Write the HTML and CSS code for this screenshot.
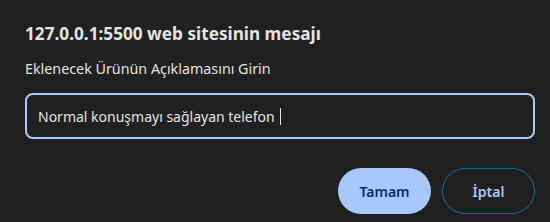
FILE: index.html
```html
<!DOCTYPE html>
<html lang="tr">
<head>
    <meta charset="UTF-8">
    <meta name="viewport" content="width=device-width, initial-scale=1.0">
    <title>Mesaj</title>
    <link rel="stylesheet" href="styles.css">
</head>
<body>

<div class="dialog">
    <h1 class="title">127.0.0.1:5500 web sitesinin mesajı</h1>
    <label class="message" for="answer">Eklenecek Ürünün Açıklamasını Girin</label>
    <div class="input-box">
        <span id="answer" class="input-text">Normal konuşmayı sağlayan telefon</span><span class="caret"></span>
    </div>
    <div class="buttons">
        <button class="btn btn-primary">Tamam</button>
        <button class="btn btn-outline">İptal</button>
    </div>
</div>

</body>
</html>
```

FILE: styles.css
```css
body {
    margin: 0;
    background-color: #202020;
    font-family: "Noto Sans", "Open Sans", sans-serif;
    color: #e3e3e3;
}
.dialog {
    width: 550px;
    height: 222px;
    box-sizing: border-box;
    padding: 22px 15px 0 25px;
}
.title {
    margin: 0;
    font-size: 17.2px;
    font-weight: 700;
    line-height: 24px;
    color: #e3e3e3;
}
.message {
    display: block;
    margin-top: 13px;
    font-size: 14.3px;
    line-height: 20px;
    color: #e3e3e3;
}
.input-box {
    margin-top: 14px;
    height: 46px;
    box-sizing: border-box;
    border: 2px solid #a8c7fa;
    border-radius: 8px;
    display: flex;
    align-items: center;
    padding-left: 11px;
}
.input-text {
    font-size: 14px;
    color: #e3e3e3;
}
.caret {
    display: inline-block;
    width: 1px;
    height: 17px;
    margin-left: 5px;
    background-color: #e3e3e3;
}
.buttons {
    display: flex;
    justify-content: flex-end;
    gap: 11px;
    margin-top: 29px;
}
.btn {
    width: 93px;
    height: 46px;
    border-radius: 23px;
    font-family: inherit;
    font-size: 14px;
    font-weight: 600;
    cursor: pointer;
}
.btn-primary {
    background-color: #a8c7fa;
    color: #062e6f;
    border: none;
}
.btn-outline {
    background-color: transparent;
    color: #a8c7fa;
    border: 1px solid #0b6fa4;
}
```
